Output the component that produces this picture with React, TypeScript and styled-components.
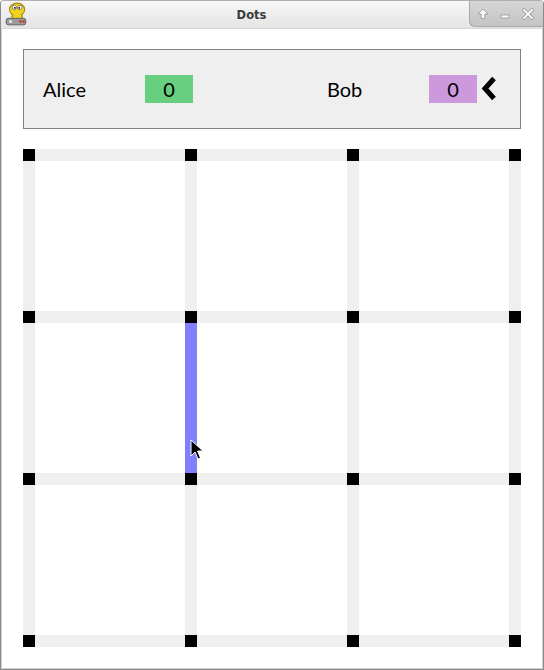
import React from "react";
import styled, { createGlobalStyle } from "styled-components";

const Global = createGlobalStyle`
  html, body { margin: 0; padding: 0; background: #ffffff; }
  #root { width: 544px; height: 670px; }
`;

const Window = styled.div`
  box-sizing: border-box;
  width: 544px;
  height: 670px;
  border: 1px solid #8a8a8a;
  border-top-color: #b0b0b0;
  border-radius: 4px 4px 0 0;
  box-shadow: inset 1px 0 0 #cfcfcf, inset -1px 0 0 #cfcfcf, inset 0 -1px 0 #cfcfcf;
  background: #ffffff;
  display: flex;
  flex-direction: column;
  overflow: hidden;
`;

const TitleBar = styled.div`
  height: 27px;
  flex: none;
  display: flex;
  align-items: flex-start;
  background: linear-gradient(#f7f7f7, #e4e4e4);
  border-bottom: 1px solid #d8d8d8;
`;

const AppIcon = styled.div`
  width: 26px;
  height: 26px;
  padding: 1px 0 0 3px;
  flex: none;
`;

const Title = styled.div`
  flex: 1;
  text-align: center;
  font-family: "DejaVu Sans", sans-serif;
  font-weight: bold;
  font-size: 11.5px;
  color: #3a3a3a;
  line-height: 28px;
  padding-left: 4px;
`;

const Buttons = styled.div`
  width: 74px;
  height: 26px;
  flex: none;
  display: flex;
  align-items: center;
  justify-content: space-around;
  padding: 0 4px 0 2px;
  box-sizing: border-box;
  background: linear-gradient(#d6d6d6, #c4c4c4);
  border-left: 1px solid #a8a8a8;
  border-bottom: 1px solid #a8a8a8;
  border-bottom-left-radius: 6px;
`;

const Content = styled.div`
  flex: 1;
  padding: 20px 0 0 22px;
  display: flex;
  flex-direction: column;
  gap: 20px;
`;

const ScorePanel = styled.div`
  box-sizing: border-box;
  width: 498px;
  height: 80px;
  background: #efefef;
  border: 1px solid #828282;
  display: flex;
  align-items: center;
  padding: 0 0 0 19px;
  font-family: Lato, "Open Sans", sans-serif;
  font-size: 20px;
  color: #000;
`;

const Name = styled.div<{ $w: number }>`
  width: ${(p) => p.$w}px;
  flex: none;
`;

const Score = styled.div<{ $bg: string }>`
  width: 48px;
  height: 28px;
  flex: none;
  background: ${(p) => p.$bg};
  display: flex;
  align-items: center;
  justify-content: center;
`;

const Spacer = styled.div<{ $w: number }>`
  width: ${(p) => p.$w}px;
  flex: none;
`;

const Board = styled.div`
  position: relative;
  display: grid;
  grid-template-columns: 12px 150px 12px 150px 12px 150px 12px;
  grid-template-rows: 12px 150px 12px 150px 12px 150px 12px;
  width: 498px;
`;

const Dot = styled.div`
  background: #000;
`;

const Edge = styled.div<{ $on?: boolean }>`
  background: ${(p) => (p.$on ? "#8080ff" : "#efefef")};
`;

const Cell = styled.div`
  background: #fff;
`;

const Cursor = styled.svg`
  position: absolute;
  left: 167px;
  top: 290px;
`;

export default function App() {
  const items: React.ReactNode[] = [];
  for (let r = 0; r < 7; r++) {
    for (let c = 0; c < 7; c++) {
      const key = `${r}-${c}`;
      if (r % 2 === 0 && c % 2 === 0) items.push(<Dot key={key} />);
      else if (r % 2 === 1 && c % 2 === 1) items.push(<Cell key={key} />);
      else items.push(<Edge key={key} $on={r === 3 && c === 2} />);
    }
  }
  return (
    <>
      <Global />
      <Window>
        <TitleBar>
          <AppIcon>
            <svg width="24" height="25" viewBox="0 0 22 23">
              <ellipse cx="12" cy="7" rx="7" ry="6" fill="#f2d21e" stroke="#a68a10" strokeWidth="1" />
              <circle cx="9.5" cy="5" r="2" fill="#fff" stroke="#555" strokeWidth="0.6" />
              <circle cx="14.5" cy="5" r="2" fill="#fff" stroke="#555" strokeWidth="0.6" />
              <circle cx="10" cy="5.3" r="0.8" fill="#000" />
              <circle cx="14" cy="5.3" r="0.8" fill="#000" />
              <path d="M8 12 C6 14 8 16 12 16 C16 16 18 14 16 12" fill="#f2d21e" stroke="#a68a10" strokeWidth="1" />
              <rect x="2" y="15" width="18" height="6" rx="2" fill="#9c9c9c" stroke="#555" strokeWidth="0.8" />
              <circle cx="6" cy="18" r="1.4" fill="#eee" />
              <circle cx="15" cy="18" r="1.2" fill="#c33" />
              <circle cx="18" cy="18" r="1.2" fill="#c33" />
            </svg>
          </AppIcon>
          <Title>Dots</Title>
          <Buttons>
            <svg width="12" height="12" viewBox="0 0 12 12">
              <path d="M6 1 L11 6 L7.8 6 L7.8 10.5 L4.2 10.5 L4.2 6 L1 6 Z" fill="#fafafa" stroke="#8a8a8a" strokeWidth="0.7" />
            </svg>
            <svg width="12" height="12" viewBox="0 0 12 12">
              <rect x="2" y="7" width="8" height="3" fill="#fafafa" stroke="#8a8a8a" strokeWidth="0.7" />
            </svg>
            <svg width="12" height="12" viewBox="0 0 12 12">
              <path d="M2 2 L10 10 M10 2 L2 10" stroke="#8a8a8a" strokeWidth="3.2" strokeLinecap="square" />
              <path d="M2 2 L10 10 M10 2 L2 10" stroke="#fafafa" strokeWidth="2" strokeLinecap="square" />
            </svg>
          </Buttons>
        </TitleBar>
        <Content>
          <ScorePanel>
            <Name $w={102}>Alice</Name>
            <Score $bg="#68cf80">0</Score>
            <Spacer $w={134} />
            <Name $w={102}>Bob</Name>
            <Score $bg="#cc99dd">0</Score>
            <svg width="22" height="28" viewBox="0 0 22 28" style={{ marginLeft: 2 }}>
              <path d="M15 3.5 L6 13.5 L15 23.5" fill="none" stroke="#000" strokeWidth="5" strokeLinejoin="miter" />
            </svg>
          </ScorePanel>
          <Board>
            {items}
            <Cursor width="14" height="22" viewBox="0 0 14 22">
              <path d="M1 1 L1 17 L5 13 L8 20 L10.5 19 L7.5 12 L13 12 Z" fill="#000" stroke="#fff" strokeWidth="1" />
            </Cursor>
          </Board>
        </Content>
      </Window>
    </>
  );
}
